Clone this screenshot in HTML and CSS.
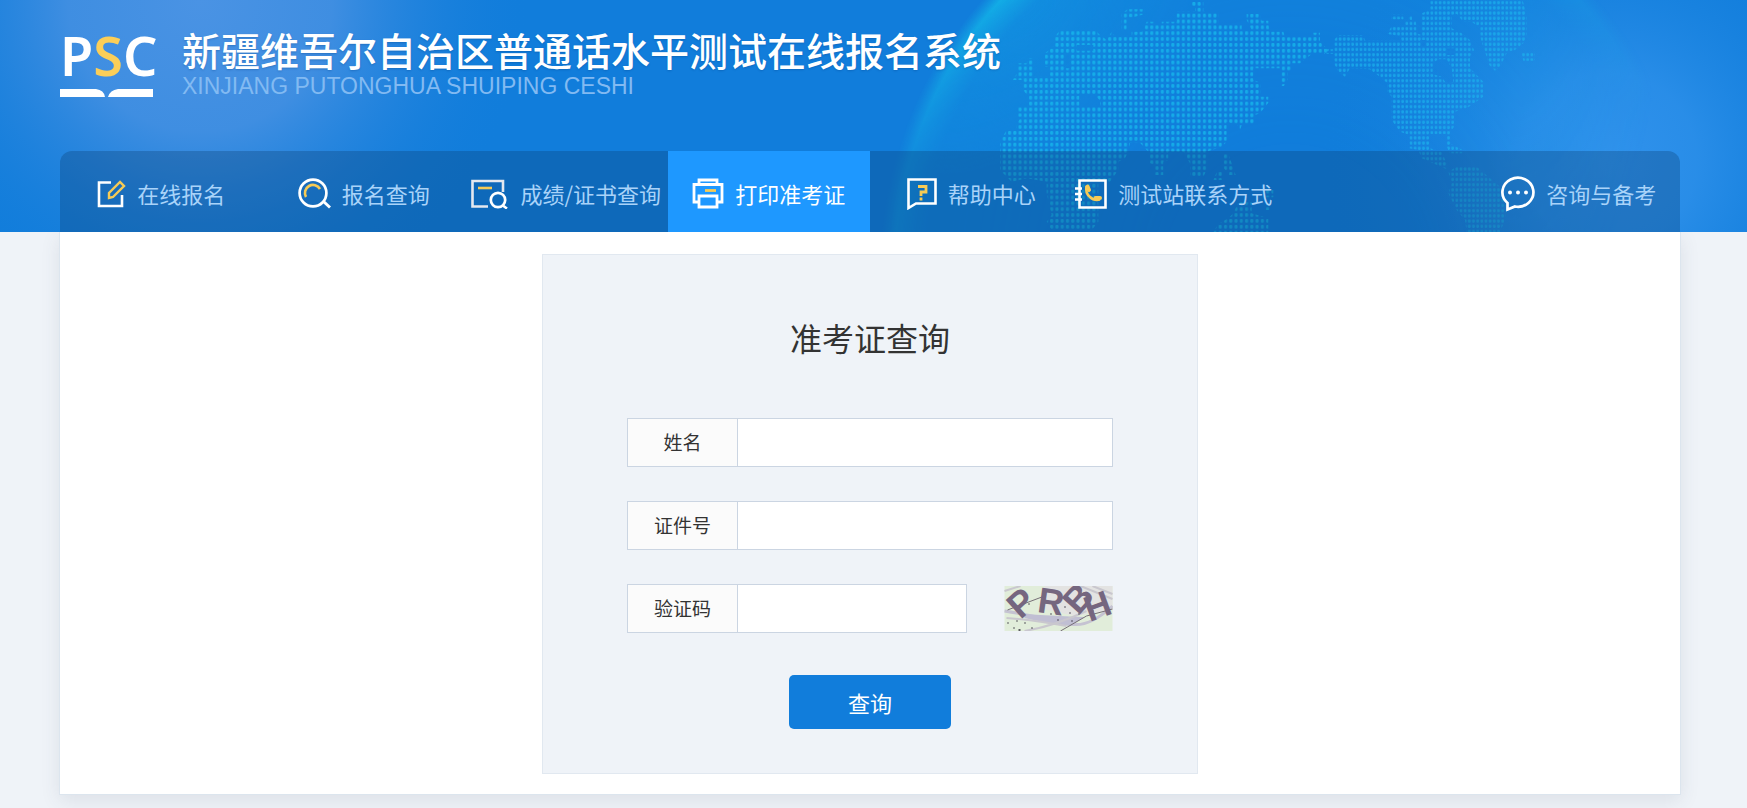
FILE: index.html
```html
<!DOCTYPE html>
<html lang="zh-CN">
<head>
<meta charset="utf-8">
<meta name="viewport" content="width=device-width, initial-scale=1">
<title>准考证查询</title>
<link rel="stylesheet" href="styles.css">
</head>
<body>
<header class="header">
  <svg class="header-art" viewBox="0 0 1747 232" preserveAspectRatio="xMidYMin slice" aria-hidden="true">
    <defs>
      <radialGradient id="glowLeft" gradientUnits="userSpaceOnUse" cx="200" cy="0" r="330">
        <stop offset="0" stop-color="#4a93e4"/><stop offset=".4" stop-color="#4490e2" stop-opacity=".9"/><stop offset="1" stop-color="#117ddb" stop-opacity="0"/>
      </radialGradient>
      <radialGradient id="glowRight" gradientUnits="userSpaceOnUse" cx="1610" cy="160" r="290">
        <stop offset="0" stop-color="#3092ec"/><stop offset=".3" stop-color="#2d90ea" stop-opacity=".85"/><stop offset=".65" stop-color="#2088e4" stop-opacity=".35"/><stop offset="1" stop-color="#117ddb" stop-opacity="0"/>
      </radialGradient>
      <radialGradient id="globe" gradientUnits="userSpaceOnUse" cx="1290" cy="270" r="410">
        <stop offset=".3" stop-color="#12a0e4" stop-opacity="0"/><stop offset=".9" stop-color="#12a0e4" stop-opacity=".5"/><stop offset=".965" stop-color="#13c0ea" stop-opacity=".75"/><stop offset="1" stop-color="#13b8e8" stop-opacity="0"/>
      </radialGradient>
      <radialGradient id="fade" gradientUnits="userSpaceOnUse" cx="1020" cy="0" r="640">
        <stop offset="0" stop-color="#fff"/><stop offset=".12" stop-color="#bbb"/><stop offset=".3" stop-color="#555"/><stop offset=".8" stop-color="#555"/><stop offset="1" stop-color="#000"/>
      </radialGradient>
      <mask id="globeMask"><rect width="1747" height="232" fill="url(#fade)"/></mask>
      <pattern id="dotsEast" patternUnits="userSpaceOnUse" width="15.8" height="17.6" x="2" y="3">
        <rect x="3" y="3" width="9" height="11" rx="3" fill="#18bdee"/>
      </pattern>
      <pattern id="dotsWest" patternUnits="userSpaceOnUse" width="12.5" height="15.6" x="2" y="0">
        <rect x="2" y="3" width="8" height="10" rx="3" fill="#1cb4ee"/>
      </pattern>
    </defs>
    <rect width="1747" height="232" fill="url(#glowLeft)"/>
    <rect x="1300" width="447" height="232" fill="url(#glowRight)"/>
    <circle cx="1290" cy="270" r="410" fill="url(#globe)" mask="url(#globeMask)"/>
    <g transform="translate(880 0) scale(.33333)" fill="url(#dotsEast)" fill-rule="evenodd" opacity=".72">
      <path d="M540 90H645L660 105 680 120 695 95 705 110H755V95H785L800 65H825V75H845V65H890V35H945V20H935V0H970V35L1015 40V75H1085V90H1115L1100 60V42H1140L1145 62H1165L1168 95H1210L1215 112H1295L1298 98H1320V125L1345 150V162H1295L1260 190H1235V210L1222 215V240L1212 258H1200V205H1120V240L1142 248V290H1165V308L1140 340 1125 345V375H1085L1080 392 1072 375 1040 365V425L1025 440 980 455V510L970 530H930V490L910 455H865V480L850 485V525H825V495L810 490 805 455 780 428H750L745 455 735 475 715 485V510L690 545H655V665L635 690H515L500 665 515 645 500 580V545L440 535 395 545 360 510V425L380 390H410V370L425 350H412V318H445V290L430 270V240H397L412 220V190H440L445 175H458V230H510V200H495V160L525 135V110ZM598 285V318H660V302L645 285ZM555 160V205H572V160ZM590 135V152H640V135Z"/>
      <path d="M725 90V42L742 28H795V42L760 52H740V90ZM1028 462H1045L1055 490 1067 525H1048L1028 500ZM1012 512H1030V540H1000ZM1075 607H1115V640L1165 655V696H1000L1015 672 1045 655 1060 640ZM1158 570H1180V592H1158ZM1155 612H1168V630H1155Z"/>
    </g>
    <g transform="translate(1250 0) scale(.33333)" fill="url(#dotsWest)" fill-rule="evenodd" opacity=".68">
      <path d="M265 105H340L345 122H455L450 108 412 102 425 78H465V60H498L500 100 515 105V40L540 30V0H818L830 50V105L820 130 795 150 770 160 750 200 735 212 718 195 690 110V85L665 65H640L620 42 605 45V85L635 100 660 120 672 150 660 170V205L700 245V290L655 322 615 335 612 380 600 398 603 432 638 450V460H600L590 440V402H540V445L575 455 590 490V508L515 475 505 450 478 445V405L450 395 425 360V290L412 275V250L390 230 358 208 300 205 285 230 265 215 252 190V120ZM565 178L548 190V222L575 230 590 252 610 245 605 205 590 178ZM512 120V138H528V120ZM590 145V165H612V145Z"/>
      <path d="M425 44H460V58H425ZM474 46H486V60H474ZM222 148H252V162H222ZM812 155H855V182H820ZM620 500H680L715 530 750 560 770 600 765 660 750 696H650L645 660 620 630 595 580 605 550 595 515Z"/>
    </g>
  </svg>
  <div class="wrap header-inner">
    <a class="brand" href="#">
      <span class="logo">
        <span class="logo-text">P<span class="logo-accent">S</span>C</span>
        <svg class="logo-book" viewBox="0 0 93 8" aria-hidden="true"><path d="M0 0H36Q44 1 45 8H0ZM93 0H58Q50 1 48 8H93Z" fill="#fff"/></svg>
      </span>
      <span class="brand-names">
        <span class="brand-title">新疆维吾尔自治区普通话水平测试在线报名系统</span>
        <span class="brand-sub">XINJIANG PUTONGHUA SHUIPING CESHI</span>
      </span>
    </a>
    <nav class="nav">
      <a class="nav-item" href="#">
        <svg width="29" height="29" viewBox="0 0 29 29" fill="none" aria-hidden="true"><path d="M14 3.500H2V27H25V16" stroke="#fff" stroke-width="2.6"/><path d="M12 19V14L23 3L27 7L16 18Z" stroke="#f7cb55" stroke-width="2.4"/></svg>
        <span>在线报名</span>
      </a>
      <a class="nav-item" href="#">
        <svg width="33" height="31" viewBox="0 0 33 31" fill="none" aria-hidden="true"><circle cx="15" cy="15" r="13.4" stroke="#fff" stroke-width="2.7"/><path d="M25 23L32 29.500" stroke="#fff" stroke-width="3"/><path d="M8 19A8 8 0 0 1 22 11" stroke="#f7cb55" stroke-width="2.6"/></svg>
        <span>报名查询</span>
      </a>
      <a class="nav-item" href="#">
        <svg width="38" height="30" viewBox="0 0 38 30" fill="none" aria-hidden="true"><path d="M17 27.500H1.500V2H32V13" stroke="#e4e8ef" stroke-width="2.6"/><circle cx="27" cy="21" r="7.200" stroke="#fff" stroke-width="2.7"/><path d="M31 26L36 29.500" stroke="#fff" stroke-width="2.6"/><path d="M7 9H21" stroke="#f7cb55" stroke-width="2.6"/></svg>
        <span>成绩/证书查询</span>
      </a>
      <a class="nav-item active" href="#" aria-current="page">
        <svg width="32" height="31" viewBox="0 0 32 31" fill="none" stroke="#fff" stroke-width="2.800" aria-hidden="true"><path d="M7 6V2H25V6M7 24H2V6.500H30V24H25M7 18H25V29H7Z"/><path d="M13 12.500H24" stroke="#f7cb55"/></svg>
        <span>打印准考证</span>
      </a>
      <a class="nav-item" href="#">
        <svg width="30" height="32" viewBox="0 0 30 32" fill="none" aria-hidden="true"><path d="M1.500 1.500H28.500V25.500H9L1.500 30Z" stroke="#fff" stroke-width="2.6"/><path d="M11 8.500H19V14H14V18M14 19.500V22.500" stroke="#f7cb55" stroke-width="2.8"/></svg>
        <span>帮助中心</span>
      </a>
      <a class="nav-item" href="#">
        <svg width="32" height="30" viewBox="0 0 32 30" fill="none" aria-hidden="true"><path d="M4.500 1.500H30.500V28.500H4.500Z" stroke="#fff" stroke-width="2.6"/><path d="M0 9.500H7M0 15H7M0 20.500H7" stroke="#fff" stroke-width="2.6"/><path d="M11.500 7Q10 14 15 18Q19 22 25 20.500" stroke="#f7cb55" stroke-width="2.600"/><path d="M12.500 7.500L14 11M20.500 19L25 19" stroke="#f7cb55" stroke-width="4" stroke-linecap="round"/></svg>
        <span>测试站联系方式</span>
      </a>
      <a class="nav-item nav-last" href="#">
        <svg width="34" height="36" viewBox="0 0 34 36" fill="none" aria-hidden="true"><path d="M6.500 27A15.500 14.500 0 1 1 14 30.500L6.500 33.500Z" stroke="#fff" stroke-width="2.700"/><g fill="#fff"><circle cx="9" cy="16.500" r="2"/><circle cx="17" cy="16.500" r="2"/><circle cx="25" cy="16.500" r="2"/></g></svg>
        <span>咨询与备考</span>
      </a>
    </nav>
  </div>
</header>
<main class="wrap">
  <div class="content">
    <form class="panel" action="#">
      <h1 class="panel-title">准考证查询</h1>
      <div class="field">
        <label class="field-label" for="name">姓名</label>
        <input class="field-input" id="name" type="text">
      </div>
      <div class="field">
        <label class="field-label" for="idno">证件号</label>
        <input class="field-input" id="idno" type="text">
      </div>
      <div class="captcha-row">
        <div class="field">
          <label class="field-label" for="code">验证码</label>
          <input class="field-input" id="code" type="text">
        </div>
        <svg class="captcha" viewBox="0 0 108 45" role="img" aria-label="验证码图片">
          <rect width="108" height="45" fill="#e1edda"/>
          <g fill="none">
            <path d="M40 0H108V24L70 30L34 22Z" fill="#e3e3e2"/>
            <path d="M0 25Q30 30 66 38Q84 42 108 20" stroke="#c5c3d2" stroke-width="3"/>
            <path d="M20 28Q52 30 80 31L66 40Q40 37 20 32Z" fill="#c0bfd3"/>
            <path d="M2 32Q30 34 62 40M0 5L16 0M76 0L108 13M88 0L108 8M20 45Q50 40 82 25" stroke="#c9c7ce" stroke-width="2"/>
            <path d="M3 24L40 10M56 45L82 30L108 23" stroke="#766e76" stroke-width="1"/>
            <path d="M12 35h1M20 37h1M3 37h1M9 42h1M14 44h2M27 42h1M46 28h1M53 34h1M67 35h1M65 27h1M76 7h1M80 9h1M24 18h1M88 25h1M60 21h1M74 28h1" stroke="#302c38" stroke-width="1.500"/>
          </g>
          <g class="captcha-text">
            <text x="16" y="34" transform="rotate(-42 16 34)">P</text>
            <text x="32" y="26" transform="rotate(8 32 26)">R</text>
            <text x="74" y="30" transform="rotate(-48 74 30)">B</text>
            <text x="85" y="36" transform="rotate(-20 85 36)">H</text>
          </g>
        </svg>
      </div>
      <button class="submit" type="submit">查询</button>
    </form>
  </div>
</main>
</body>
</html>
```
FILE: styles.css
```css
* { box-sizing: border-box; }
body {
  min-height: 100vh;
  margin: 0;
  background: #eff3f8;
  color: #333;
  font-family: "Noto Sans CJK SC", sans-serif;
}
a { color: inherit; text-decoration: none; }
.wrap { padding: 0 67px 0 60px; }

.header {
  position: relative;
  background: #117ddb;
  overflow: hidden;
}
.header-art {
  position: absolute;
  inset: 0;
  width: 100%;
  height: 100%;
}
.header-inner { position: relative; }
.brand {
  display: flex;
  gap: 29px;
  height: 151px;
  padding-top: 29px;
}
.logo { width: 93px; }
.logo-text {
  display: block;
  height: 60px;
  color: #fff;
  font-family: "Noto Sans", sans-serif;
  font-size: 54px;
  font-weight: 600;
  line-height: 52px;
}
.logo-accent { color: #fbce58; }
.logo-book { display: block; width: 93px; height: 8px; }
.brand-names {
  display: flex;
  flex-direction: column;
  gap: 4px;
  white-space: nowrap;
}
.brand-title {
  color: #fff;
  font-size: 39px;
  font-weight: 500;
  line-height: 40px;
  text-shadow: 0 1px 2px rgba(0, 60, 130, .3);
}
.brand-sub {
  color: #82baf2;
  font-family: "Liberation Sans", sans-serif;
  font-size: 23px;
  line-height: 26px;
}

.nav {
  display: grid;
  grid-template-columns: repeat(8, 1fr);
  height: 81px;
  border-radius: 12px 12px 0 0;
  background: rgba(10, 60, 110, .3);
}
.nav-item {
  display: flex;
  align-items: center;
  justify-content: center;
  gap: 11px;
  padding-top: 4px;
  color: #a9d3f9;
  font-size: 22px;
  line-height: 32px;
  white-space: nowrap;
}
.nav-item svg { flex: none; }
.nav-item span { padding-bottom: 2px; }
.nav-item.active { background: #1e98ff; color: #fff; }
.nav-last { grid-column: 8; }

main { padding-bottom: 14px; }
main.wrap { padding-bottom: 13px; }
.content {
  margin: 0 -1px;
  padding: 22px 0 20px;
  border: 1px solid #dce5ee;
  border-top: 0;
  background: #fff;
  box-shadow: 0 6px 18px rgba(60, 70, 90, .1);
}
.panel {
  display: flex;
  flex-direction: column;
  gap: 34px;
  width: 656px;
  max-width: 100%;
  margin: 0 auto;
  padding: 58px 84px 44px;
  border: 1px solid #e1e8f0;
  background: #eff3f8;
}
.panel-title {
  margin: 0 0 23px;
  font-size: 32px;
  font-weight: 400;
  line-height: 48px;
  text-align: center;
}
.field {
  display: flex;
  flex: 1;
  min-width: 0;
  height: 49px;
  border: 1px solid #cbd5e2;
  background: #fff;
}
.field-label {
  flex: none;
  width: 110px;
  border-right: 1px solid #cbd5e2;
  background: #fbfbfb;
  font-size: 19px;
  line-height: 46px;
  text-align: center;
}
.field-input {
  flex: 1;
  min-width: 0;
  padding: 0 14px;
  border: 0;
  outline: 0;
  background: #fff;
  font: inherit;
  font-size: 19px;
}
.panel > .field { flex: none; }
.captcha-row { display: flex; align-items: center; gap: 37px; }
.captcha { flex: none; width: 109px; height: 45px; }
.captcha-text {
  fill: #75667f;
  font-family: "Liberation Sans", sans-serif;
  font-size: 36px;
  font-weight: 700;
}
.submit {
  align-self: center;
  width: 162px;
  height: 54px;
  margin-top: 8px;
  padding: 0;
  border: 0;
  border-radius: 5px;
  background: #117ddb;
  color: #fff;
  font: inherit;
  font-size: 22px;
}
```
